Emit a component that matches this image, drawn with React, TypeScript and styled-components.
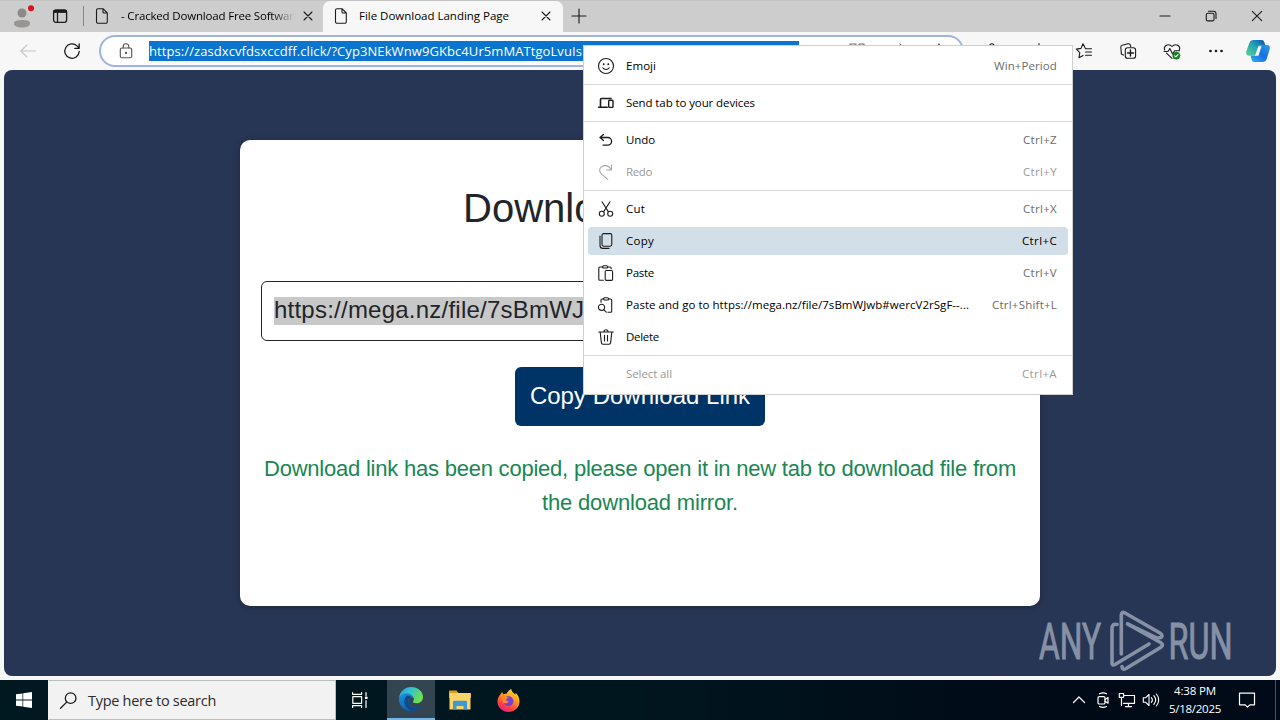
import React, { useLayoutEffect, useRef, useState } from "react";
import styled, { createGlobalStyle, css } from "styled-components";

const GlobalStyle = createGlobalStyle`
  * { box-sizing: border-box; }
  body { margin: 0; background: #f7f7f7; overflow: hidden; }
`;

const uiFont = `"Open Sans", "Noto Sans", sans-serif`;

const Desktop = styled.div`
  position: relative;
  width: 1280px;
  height: 720px;
  display: flex;
  flex-direction: column;
  overflow: hidden;
  background: #f7f7f7;
  font-family: ${uiFont};
  color: #000;
`;

const Cell = styled.div<{ $w: number }>`
  flex: none;
  width: ${(p) => p.$w}px;
  height: 100%;
  display: flex;
  align-items: center;
  justify-content: center;
`;

const Icon = styled.svg<{ $s?: number; $c?: string; $sw?: number }>`
  flex: none;
  display: block;
  width: ${(p) => p.$s ?? 16}px;
  height: ${(p) => p.$s ?? 16}px;
  fill: none;
  stroke: ${(p) => p.$c ?? "#1b1b1b"};
  stroke-width: ${(p) => p.$sw ?? 1.1};
  stroke-linecap: round;
  stroke-linejoin: round;
  overflow: visible;
`;

/* Text tracked so that it spans an exact width. */
const Tracked = styled.span`
  display: inline-block;
  white-space: pre;
`;

function Fit({ width, children }: { width: number; children: string }) {
  const ref = useRef<HTMLSpanElement>(null);
  const [gap, setGap] = useState(0);
  useLayoutEffect(() => {
    if (ref.current) {
      const natural = ref.current.getBoundingClientRect().width;
      setGap((width - natural) / children.length);
    }
  }, [width, children]);
  return (
    <Tracked ref={ref} style={{ letterSpacing: `${gap}px` }}>
      {children}
    </Tracked>
  );
}

/* ---------- tab strip ---------- */

const TabStrip = styled.header`
  flex: none;
  height: 32px;
  display: flex;
  background: #cdcdcd;
  border-top: 1px solid #c4c4c4;
`;

const Profile = styled(Cell)`
  padding: 2px 0 0 0;
`;

const TabActions = styled(Cell)`
  margin-right: 7px;
  padding-bottom: 2px;
`;

const Tab = styled.div<{ $active?: boolean }>`
  flex: none;
  width: ${(p) => (p.$active ? 240 : 239)}px;
  display: flex;
  align-items: center;
  height: 31px;
  padding: 0 0 2px 10px;
  font-size: 11.5px;
  ${(p) =>
    p.$active &&
    css`
      background: #f7f7f7;
      border-radius: 7px 7px 0 0;
    `}
`;

const TabDivider = styled.div`
  flex: none;
  width: 1px;
  height: 20px;
  margin-top: 5px;
  background: #858585;
`;

const TabTitle = styled.div<{ $fade?: boolean }>`
  flex: none;
  width: 175px;
  margin-left: ${(p) => (p.$fade ? 11 : 10)}px;
  line-height: 20px;
  overflow: hidden;
  ${(p) =>
    p.$fade &&
    css`
      mask-image: linear-gradient(90deg, #000 150px, transparent 174px);
    `}
`;

const NewTab = styled(Cell)`
  padding-bottom: 2px;
`;

const WindowControls = styled.div`
  margin-left: auto;
  display: flex;
  height: 29px;
`;

const FilePage = () => (
  <Icon viewBox="0 0 16 16">
    <path d="M4 .7h5l4.300 4.300v8.800a1.500 1.500 0 0 1-1.500 1.500H4a1.500 1.500 0 0 1-1.500-1.500V2.200A1.500 1.500 0 0 1 4 .7zM9 .7V4a1 1 0 0 0 1 1h3.300" />
  </Icon>
);

const Cross = ({ s }: { s: number }) => (
  <Icon viewBox="0 0 10 10" $s={s}>
    <path d="M1 1l8 8M9 1L1 9" />
  </Icon>
);

/* ---------- toolbar ---------- */

const Toolbar = styled.div`
  flex: none;
  height: 38px;
  display: flex;
  align-items: center;
  background: #f7f7f7;
`;

const NavButtons = styled.div`
  display: flex;
  width: 99px;
  height: 38px;
  padding-left: 6px;
`;

const AddressBar = styled.div`
  flex: none;
  width: 865px;
  height: 32px;
  display: flex;
  align-items: center;
  border: 2px solid #9fb4dc;
  border-radius: 16px;
  background: #fff;
`;

const LockCell = styled(Cell)`
  padding-left: 2px;
`;

const Selection = styled.div`
  width: 650px;
  height: 20px;
  overflow: hidden;
  background: #0a74cf;
  color: #fff;
  font-size: 13px;
  line-height: 20px;
`;

const AddressActions = styled.div`
  display: flex;
  margin-left: 38px;
  height: 100%;
`;

const ToolButtons = styled.div`
  display: flex;
  height: 38px;
  margin-left: auto;
  padding-right: 2px;
`;

/* ---------- page ---------- */

const Page = styled.main`
  flex: none;
  height: 606px;
  margin: 0 4px;
  padding-top: 70px;
  border-radius: 8px;
  background: #283655;
  font-family: "Liberation Sans", Arial, sans-serif;
`;

const Card = styled.section`
  width: 800px;
  height: 466px;
  margin: 0 auto;
  padding: 44px 20px 0;
  border-radius: 10px;
  background: #fff;
  box-shadow: 0 1px 6px rgba(0, 0, 0, 0.3);
  display: flex;
  flex-direction: column;
`;

const Title = styled.h1`
  margin: 0 0 49px;
  padding-left: 203px;
  font-size: 40px;
  font-weight: 400;
  line-height: 48px;
  height: 48px;
  color: #212529;
`;

const LinkField = styled.div`
  flex: none;
  height: 60px;
  margin-left: 1px;
  padding: 15px 12px;
  border: 1px solid #212529;
  border-radius: 6px;
  overflow: hidden;
  font-size: 24px;
  letter-spacing: 0.23px;
  line-height: 26px;
  color: #212529;
  white-space: nowrap;
`;

const Marked = styled.span`
  display: inline-block;
  height: 28px;
  background: #c8c8c8;
`;

const CopyButton = styled.button`
  flex: none;
  align-self: center;
  width: 250px;
  height: 59px;
  margin: 26px 0 26px;
  padding: 0 0 2px;
  border: 0;
  border-radius: 6px;
  background: #003366;
  color: #fff;
  font: 24px "Liberation Sans", Arial, sans-serif;
`;

const Message = styled.p`
  margin: 0;
  text-align: center;
  white-space: nowrap;
  font-size: 22px;
  line-height: 34px;
  color: #198754;
`;

/* ---------- context menu ---------- */

const Menu = styled.div`
  position: absolute;
  left: 583px;
  top: 45px;
  width: 490px;
  height: 350px;
  display: flex;
  flex-direction: column;
  padding: 4px 0;
  border: 1px solid #cfd0d2;
  background: #fff;
  font-size: 11.5px;
`;

const MenuItem = styled.div<{ $hot?: boolean; $off?: boolean }>`
  flex: none;
  display: flex;
  align-items: center;
  height: 28px;
  margin: 2px 4px;
  padding: 0 11px 0 10px;
  border-radius: 4px;
  background: ${(p) => (p.$hot ? "#d3dfe8" : "transparent")};
  color: ${(p) => (p.$off ? "#9a9a9a" : "#000")};
`;

const MenuLabel = styled.span`
  margin-left: 12px;
  line-height: 20px;
`;

const Shortcut = styled.span<{ $hot?: boolean; $off?: boolean }>`
  margin-left: auto;
  line-height: 20px;
  color: ${(p) => (p.$hot ? "#000" : p.$off ? "#9a9a9a" : "#6b6b6b")};
`;

const Separator = styled.div`
  flex: none;
  height: 1px;
  margin: 2px 0;
  background: #d6d6d6;
`;

type Entry = {
  label: string;
  w: number;
  keys?: string;
  kw?: number;
  icon?: React.ReactNode;
  hot?: boolean;
  off?: boolean;
};

const groups: Entry[][] = [
  [
    {
      label: "Emoji",
      w: 30,
      keys: "Win+Period",
      kw: 63,
      icon: (
        <>
          <circle cx="8" cy="8" r="7.500" />
          <path d="M4.800 9.800c1.500 2.200 4.900 2.200 6.400 0" />
          <circle cx="5.700" cy="6.200" r=".4" fill="#1b1b1b" />
          <circle cx="10.300" cy="6.200" r=".4" fill="#1b1b1b" />
        </>
      ),
    },
  ],
  [
    {
      label: "Send tab to your devices",
      w: 129,
      icon: (
        <>
          <path d="M2.500 11.500V4.500a1 1 0 0 1 1-1H13M.6 12.300h8.600" strokeWidth="1.600" />
          <rect x="10.700" y="5.200" width="4.300" height="7.200" rx=".8" strokeWidth="1.400" />
        </>
      ),
    },
  ],
  [
    {
      label: "Undo",
      w: 29,
      keys: "Ctrl+Z",
      kw: 34,
      icon: <path d="M5.500 2.500L2 5.500l3.500 3M2 5.500h7.800a3.800 3.800 0 0 1 0 7.600H5" strokeWidth="1.300" />,
    },
    {
      label: "Redo",
      w: 26,
      keys: "Ctrl+Y",
      kw: 34,
      off: true,
      icon: <path d="M13.500 1v5H8.700M13.300 5.800C11 1.500 7 .8 4 2.400 1 4.200.9 7.700 3.300 9.800l6.500 5.500" />,
    },
  ],
  [
    {
      label: "Cut",
      w: 19,
      keys: "Ctrl+X",
      kw: 34,
      icon: (
        <>
          <path d="M4 .8l6.300 9.800M12 .8L5.700 10.600" />
          <circle cx="3.800" cy="12.700" r="2.500" />
          <circle cx="12.200" cy="12.700" r="2.500" />
        </>
      ),
    },
    {
      label: "Copy",
      w: 28,
      keys: "Ctrl+C",
      kw: 35,
      hot: true,
      icon: (
        <>
          <rect x="4" y=".6" width="9.800" height="12.600" rx="1.600" />
          <path d="M2 3v9.400a3 3 0 0 0 3 3h6" />
        </>
      ),
    },
    {
      label: "Paste",
      w: 28,
      keys: "Ctrl+V",
      kw: 34,
      icon: (
        <>
          <path d="M4.600 2H1.800a1 1 0 0 0-1 1v11.200a1 1 0 0 0 1 1h3.500M9.800 2h2.300a1 1 0 0 1 1 1v.8" />
          <rect x="4.600" y=".7" width="5" height="2.300" rx="1" />
          <rect x="7.200" y="5.500" width="7.400" height="9.900" rx="1.200" />
        </>
      ),
    },
    {
      label: "Paste and go to https://mega.nz/file/7sBmWJwb#wercV2rSgF--...",
      w: 343,
      keys: "Ctrl+Shift+L",
      kw: 65,
      icon: (
        <>
          <path d="M3 5.300V3a1 1 0 0 1 1-1h1.500M11 2h1.700a1 1 0 0 1 1 1v11.200a1 1 0 0 1-1 1H10" />
          <rect x="5.600" y=".7" width="5" height="2.300" rx="1" />
          <circle cx="3.500" cy="10.300" r="3.100" />
          <path d="M5.700 12.600l2.600 2.600" />
        </>
      ),
    },
    {
      label: "Delete",
      w: 33,
      icon: (
        <path d="M.8 3h14.400M6 2.800a2 2 0 0 1 4 0M2.200 3.200l1.200 10.700a1.500 1.500 0 0 0 1.500 1.300h6.200a1.500 1.500 0 0 0 1.500-1.300l1.200-10.700M6.500 6.300v5.600M9.500 6.300v5.600" />
      ),
    },
  ],
  [{ label: "Select all", w: 46, keys: "Ctrl+A", kw: 35, off: true }],
];

/* ---------- taskbar ---------- */

const Taskbar = styled.footer`
  flex: none;
  height: 40px;
  margin-top: 4px;
  display: flex;
  background: linear-gradient(90deg, #001820 0, #00161f 50%, #000a17 82%, #000a18 100%);
  color: #fff;
`;

const SearchBox = styled.div`
  width: 288px;
  height: 40px;
  display: flex;
  align-items: center;
  padding-left: 11px;
  background: #f2f2f2;
  border: 1px solid #bdbdbd;
  border-left-color: #f2f2f2;
  color: #2b2b2b;
  font-size: 14.5px;
`;

const SearchLabel = styled.span`
  margin: 2px 0 0 11px;
  line-height: 24px;
`;

const AppCell = styled(Cell)<{ $active?: boolean }>`
  ${(p) =>
    p.$active &&
    css`
      background: #334550;
      border-bottom: 2px solid #76b5e8;
    `}
`;

const TaskViewCell = styled(AppCell)`
  padding-right: 3px;
`;

const Tray = styled.div`
  margin-left: auto;
  display: flex;
  height: 40px;
`;

const Clock = styled(Cell)`
  flex-direction: column;
  font-size: 11.5px;
  line-height: 18px;
  padding-bottom: 1px;
`;

const ShowDesktop = styled.div`
  width: 5px;
  margin-left: 8px;
  border-left: 1px solid #4d535d;
`;

const Watermark = styled.svg`
  position: absolute;
  left: 1034px;
  top: 606px;
  width: 204px;
  height: 68px;
  font-family: Roboto, sans-serif;
  fill: #8791a5;
`;

export default function App() {
  return (
    <>
      <GlobalStyle />
      <Desktop>
        <TabStrip>
          <Profile $w={44}>
            <Icon viewBox="0 0 24 24" $s={24} stroke="none">
              <circle cx="12" cy="7" r="4.500" fill="#8c8a88" stroke="none" />
              <path d="M4 17.500c0-2.600 3-3.500 8-3.500s8 .9 8 3.500-3.500 4-8 4-8-1.400-8-4z" fill="#989694" stroke="none" />
              <circle cx="21" cy="2.200" r="3" fill="#e0101a" stroke="none" />
            </Icon>
          </Profile>
          <TabActions $w={32}>
            <Icon viewBox="0 0 16 16" $sw={1.3}>
              <rect x="1.600" y="2" width="13" height="12.300" rx="2.300" />
              <path d="M2 4h12.300M5.500 4.500v9.500" />
              <path d="M2.300 3.200h11.500" strokeWidth="2.400" />
            </Icon>
          </TabActions>
          <TabDivider />
          <Tab>
            <FilePage />
            <TabTitle $fade>
              <Fit width={179}>- Cracked Download Free Software</Fit>
            </TabTitle>
            <Cell $w={24}><Cross s={10} /></Cell>
          </Tab>
          <Tab $active>
            <FilePage />
            <TabTitle>
              <Fit width={150}>File Download Landing Page</Fit>
            </TabTitle>
            <Cell $w={24}><Cross s={10} /></Cell>
          </Tab>
          <NewTab $w={32}>
            <Icon viewBox="0 0 16 16" $s={14} $sw={1.3}><path d="M8 0v16M0 8h16" /></Icon>
          </NewTab>
          <WindowControls>
            <Cell $w={46}><Icon viewBox="0 0 10 10" $s={10}><path d="M0 5h10" /></Icon></Cell>
            <Cell $w={46}>
              <Icon viewBox="0 0 10 10" $s={10}>
                <rect x=".3" y="2.200" width="7.700" height="7.700" rx="1.500" />
                <path d="M2.500.3h5a2.500 2.500 0 0 1 2.500 2.500v4.700" />
              </Icon>
            </Cell>
            <Cell $w={46}><Icon viewBox="0 0 10 10" $s={10}><path d="M.3.3l9.400 9.400M9.700.3L.3 9.700" /></Icon></Cell>
          </WindowControls>
        </TabStrip>

        <Toolbar>
          <NavButtons>
            <Cell $w={44}>
              <Icon viewBox="0 0 16 16" $c="#c6c6c6"><path d="M15.500 8H.8M7 2L.8 8 7 14" /></Icon>
            </Cell>
            <Cell $w={44}>
              <Icon viewBox="0 0 16 16" $sw={1.3}>
                <path d="M15.200 8.500A7.200 7.200 0 1 1 13 2.900l2 2M15.200.8v4.500h-4.500" />
              </Icon>
            </Cell>
          </NavButtons>
          <AddressBar>
            <LockCell $w={48}>
              <Icon viewBox="0 0 16 16" $c="#555">
                <rect x="2.300" y="5" width="11.400" height="9.800" rx="1.600" />
                <path d="M5.200 5V3.500a2.800 2.800 0 0 1 5.600 0V5" />
                <circle cx="8" cy="9.900" r=".6" fill="#555" />
              </Icon>
            </LockCell>
            <Selection>
              <Fit width={433}>https://zasdxcvfdsxccdff.click/?Cyp3NEkWnw9GKbc4Ur5mMATtgoLvuIs</Fit>
            </Selection>
            <AddressActions>
              <Cell $w={40}>
                <Icon viewBox="0 0 16 16" $c="#666"><rect x="1" y="1" width="6" height="6" /><rect x="10" y="1" width="5" height="6" /></Icon>
              </Cell>
              <Cell $w={43}>
                <Icon viewBox="0 0 16 16" $c="#666"><path d="M9 1c2 2 2 4 0 6" /></Icon>
              </Cell>
              <Cell $w={38}>
                <Icon viewBox="0 0 16 16" $c="#555"><path d="M8 .8l2 4.500 5 .5-3.700 3.300 1 5L8 11.600l-4.300 2.500 1-5L1 5.800l5-.5z" /></Icon>
              </Cell>
            </AddressActions>
          </AddressBar>
          <Cell $w={56}>
            <Icon viewBox="0 0 16 16"><path d="M5.500 3a2.300 2.300 0 0 1 4.600 0h3v4H1V3z" /></Icon>
          </Cell>
          <Cell $w={38}>
            <Icon viewBox="0 0 16 16"><path d="M8 .5v15M3 3H1v10h2" /></Icon>
          </Cell>
          <ToolButtons>
            <Cell $w={44}>
              <Icon viewBox="0 0 16 16">
                <path d="M9.300 5.200L7 .8 5 5.400.4 6.100l3.400 3.500L3 14.700l4-2.300M9.500 5.700h6M9.500 9h6M9.500 12.300h6" />
              </Icon>
            </Cell>
            <Cell $w={44}>
              <Icon viewBox="0 0 16 16">
                <path d="M3.600 12l-1-.3a2 2 0 0 1-1.300-2.500L.8 4.500a2 2 0 0 1 1.500-2.300L8 .8a2 2 0 0 1 2.400 1.500l.3 1.200" />
                <rect x="5.300" y="4.800" width="10.300" height="10.500" rx="2.300" />
                <path d="M10.450 7v6M7.500 10h6" strokeWidth="1.400" />
              </Icon>
            </Cell>
            <Cell $w={44}>
              <Icon viewBox="0 0 16 16">
                <path d="M.7 7C-.8 3 4.500-.3 8 3.500 11.500-.3 17 3 15.300 7M2.500 10.200L8 15.300M0 8.500h4l1.800-3 2.800 5.500 2-3.300h5" />
                <circle cx="12.300" cy="12.700" r="3.600" fill="#12821b" stroke="#12821b" strokeWidth=".6" />
                <path d="M10.600 12.800l1.200 1.100 2.200-2.300" stroke="#fff" />
              </Icon>
            </Cell>
            <Cell $w={44}>
              <Icon viewBox="0 0 16 16">
                {[2.5, 8, 13.5].map((x) => (
                  <circle key={x} cx={x} cy="8" r=".8" fill="#1b1b1b" />
                ))}
              </Icon>
            </Cell>
            <Cell $w={40}>
              <Icon viewBox="0 0 24 24" $s={24} stroke="none">
                <defs>
                  <linearGradient id="cpA" x1="0" y1="1" x2="1" y2="0">
                    <stop offset="0" stopColor="#5fd08e" />
                    <stop offset=".5" stopColor="#23a7b5" />
                    <stop offset="1" stopColor="#0d4fae" />
                  </linearGradient>
                  <linearGradient id="cpB" x1="0" y1="1" x2="1" y2="0">
                    <stop offset="0" stopColor="#2bb5ee" />
                    <stop offset=".5" stopColor="#1a6fe0" />
                    <stop offset="1" stopColor="#2a9cea" />
                  </linearGradient>
                </defs>
                <path d="M7.500 1h8c2 0 2.600 1.300 3 2.700L19.300 6h-3.500c-2 0-2.700 1-3.300 3l-1.500 5c-.7 2-1.500 2.700-3.500 2.700H3C.5 16.700-.3 14.500.3 12.500L3.300 4C4 2 5.500 1 7.500 1z" fill="url(#cpA)" stroke="none" />
                <path d="M16.500 23h-8c-2 0-2.600-1.300-3-2.700L4.700 16.700h3c2 0 2.800-.8 3.400-2.800l1.600-5c.6-2 1.400-2.800 3.400-2.800H21c2.500 0 3.400 2.100 2.700 4.200L20.700 20c-.7 2-2.200 3-4.200 3z" fill="url(#cpB)" stroke="none" />
                <path d="M12.300 7.200h3.200l-3 9.500H9z" fill="#f7f7f7" stroke="none" />
              </Icon>
            </Cell>
          </ToolButtons>
        </Toolbar>

        <Page>
          <Card>
            <Title>Download</Title>
            <LinkField>
              <Marked>https://mega.nz/file/7sBmWJwb#wercV2rSgF--</Marked>
            </LinkField>
            <CopyButton>Copy Download Link</CopyButton>
            <Message>
              <Fit width={752}>Download link has been copied, please open it in new tab to download file from</Fit>
              <br />
              <Fit width={196}>the download mirror.</Fit>
            </Message>
          </Card>
        </Page>

        <Taskbar>
          <Cell $w={48}>
            <Icon viewBox="0 0 16 16" stroke="none">
              <path d="M0 2.300l6.500-.9v6.200H0zM7.200 1.300L16 0v7.600H7.200zM0 8.400h6.500v6.200L0 13.700zM7.200 8.400H16V16l-8.800-1.300z" fill="#fff" stroke="none" />
            </Icon>
          </Cell>
          <SearchBox>
            <Icon viewBox="0 0 16 16" $s={17} $sw={1.2}>
              <circle cx="10" cy="5.800" r="5" />
              <path d="M6.300 9.500L.5 15.300" />
            </Icon>
            <SearchLabel><Fit width={128}>Type here to search</Fit></SearchLabel>
          </SearchBox>
          <TaskViewCell $w={51}>
            <Icon viewBox="0 0 16 16" $c="#fff" $sw={1.2}>
              <path d="M.6.5v1.800h9V.5M.6 15.500v-1.800h9v1.800M14 .5v3M14 8.500v7" />
              <rect x=".8" y="4.700" width="8.800" height="6.600" />
              <rect x="13.500" y="5" width="1.500" height="1.500" fill="#fff" />
            </Icon>
          </TaskViewCell>
          <AppCell $w={48} $active>
            <Icon viewBox="0 0 24 24" $s={24}>
              <defs>
                <linearGradient id="edgeTop" x1="0" y1="0" x2="1" y2=".4">
                  <stop offset="0" stopColor="#2a9fe0" />
                  <stop offset=".5" stopColor="#36c3d0" />
                  <stop offset="1" stopColor="#6ee04b" />
                </linearGradient>
                <linearGradient id="edgeBody" x1="0" y1="0" x2=".6" y2="1">
                  <stop offset="0" stopColor="#1c97de" />
                  <stop offset="1" stopColor="#0c59a4" />
                </linearGradient>
              </defs>
              <path d="M0 11C1 4 6 0 12 0c7 0 12 4.500 12 10 0 4-3 6.300-6.500 6.300-3 0-4-1-3.300-2 1-1.500.8-3-.2-4.300C10.500 6 3 6.500 0 11z" fill="url(#edgeTop)" stroke="none" />
              <path d="M0 11.500C1 7.800 4.300 6 8 6.200c3.500.2 6 2.300 6.500 5-1-1.500-4.500-1-5 2-.7 4.300 3.500 6.800 7.500 6.800 2.300 0 4-.8 5.300-1.500C20 22 16.500 24 12 24 5 24-.5 18.500 0 11.500z" fill="url(#edgeBody)" stroke="none" />
              <path d="M7.800 8.500c-5 5-1.800 13.500 5 15.300 4 0 7.500-2.300 9.500-5.300-6 3.500-13 1.200-13-4.500 0-2 1.500-3.500 3.500-3.700-1.300-1.500-3.200-2.200-5-1.800z" fill="#114a8b" stroke="none" />
            </Icon>
          </AppCell>
          <AppCell $w={49}>
            <Icon viewBox="0 0 22 20" $s={22}>
              <path d="M0 1.500C0 .7.500.5 1 .5h6.500L9.500 3H22v5H0z" fill="#e29a17" stroke="none" />
              <path d="M1 3h20.500v16.500H.5V3z" fill="#fbd568" stroke="none" />
              <path d="M4 19.500v-7.200c0-1 .6-1.500 1.500-1.500h11c.9 0 1.500.5 1.500 1.500v7.200h-3.500V16h-7v3.500z" fill="#3f97d3" stroke="none" />
            </Icon>
          </AppCell>
          <AppCell $w={49}>
            <Icon viewBox="0 0 24 24" $s={23}>
              <defs>
                <linearGradient id="fox" x1=".8" y1="0" x2=".3" y2="1">
                  <stop offset="0" stopColor="#ffe23c" />
                  <stop offset=".4" stopColor="#ff9a1f" />
                  <stop offset=".75" stopColor="#ff4242" />
                  <stop offset="1" stopColor="#e9207f" />
                </linearGradient>
              </defs>
              <path d="M4 5c.5-.8 1-1.500 1.500-2l1 2.500C8 4.800 9 4.800 10 5c1-2.500 2.500-4 5-5 0 3 2.500 4 4 6l.5-2c2.700 2.500 4 5.500 4 9 0 6.500-5.300 11-11.500 11S.5 19.300.5 13C.5 9.800 2 7.500 4 5z" fill="url(#fox)" stroke="none" />
              <circle cx="12" cy="12.800" r="5.200" fill="#7a3fd0" stroke="none" />
              <path d="M5 9c3-1.500 5-.8 7.500.5-1.500 0-3 .8-3 2 0 1 1.500 1.500 3 1.500-1 2-4 2.500-6 1z" fill="#ff8a2a" stroke="none" />
            </Icon>
          </AppCell>
          <Tray>
            <Cell $w={24}>
              <Icon viewBox="0 0 12 12" $s={12} $c="#fff" $sw={1.2}><path d="M.5 8.500L6 3l5.500 5.500" /></Icon>
            </Cell>
            <Cell $w={24}>
              <Icon viewBox="0 0 16 16" $c="#fff" $sw={1.2}>
                <rect x="3" y="4.700" width="7" height="7.300" rx="1.300" />
                <path d="M10 7.500l3-2v5.700l-3-2M4.500 1.800Q8 .0 11.500 1.800M4.500 14.500Q8 16.300 11.500 14.500" />
              </Icon>
            </Cell>
            <Cell $w={24}>
              <Icon viewBox="0 0 16 16" $c="#fff" $sw={1.2}>
                <path d="M5.500 3.500h10v7.800H4.500M9.500 11.500v3M6.500 14.600h6M2.500 5.500v8" />
                <rect x=".3" y="1.500" width="4.300" height="3.800" />
              </Icon>
            </Cell>
            <Cell $w={24}>
              <Icon viewBox="0 0 16 16" $c="#fff">
                <path d="M.3 5.800h2.200L6 2.500v11l-3.500-3.300H.3zM8.300 5.500c1.300 1.500 1.300 3.500 0 5M10.800 3.700c2.300 2.600 2.300 6 0 8.600M13.300 2c3.200 3.500 3.200 8.500 0 12" />
              </Icon>
            </Cell>
            <Clock $w={64}>
              <Fit width={42}>4:38 PM</Fit>
              <Fit width={52}>5/18/2025</Fit>
            </Clock>
            <Cell $w={40}>
              <Icon viewBox="0 0 16 16" $c="#fff" $sw={1.2}>
                <path d="M.5 1.200h15v11.600h-4.700L8.500 15.200 6.200 12.800H.5z" />
              </Icon>
            </Cell>
            <ShowDesktop />
          </Tray>
        </Taskbar>

        <Watermark viewBox="0 0 204 68">
          <g stroke="#8791a5" strokeWidth="1">
            <text x="5" y="52.500" fontSize="50" textLength="62" lengthAdjust="spacingAndGlyphs">ANY</text>
            <text x="134.500" y="52.500" fontSize="50" textLength="64" lengthAdjust="spacingAndGlyphs">RUN</text>
          </g>
          <g fill="none" stroke="#8791a5" strokeWidth="3.600" strokeLinejoin="round" strokeLinecap="round">
            <path d="M83 18.500Q78 17 78 23V57Q78 60 81 58.500L115 38" />
            <path d="M87.300 48V9Q87.500 5 91 7L126 27Q129.500 29.500 127 31.500L123 32L94 18" />
            <path d="M93.500 18L126.500 36.500Q130.500 39 126.500 41.500L92 62.500Q88 64.500 88 60.500" />
          </g>
        </Watermark>

        <Menu>
          {groups.map((group, i) => (
            <React.Fragment key={i}>
              {i > 0 && <Separator />}
              {group.map((e) => (
                <MenuItem key={e.label} $hot={e.hot} $off={e.off}>
                  <Icon viewBox="0 0 16 16" $c={e.off ? "#a6a6a6" : undefined}>{e.icon}</Icon>
                  <MenuLabel><Fit width={e.w}>{e.label}</Fit></MenuLabel>
                  {e.keys && (
                    <Shortcut $hot={e.hot} $off={e.off}>
                      <Fit width={e.kw ?? 34}>{e.keys}</Fit>
                    </Shortcut>
                  )}
                </MenuItem>
              ))}
            </React.Fragment>
          ))}
        </Menu>
      </Desktop>
    </>
  );
}
